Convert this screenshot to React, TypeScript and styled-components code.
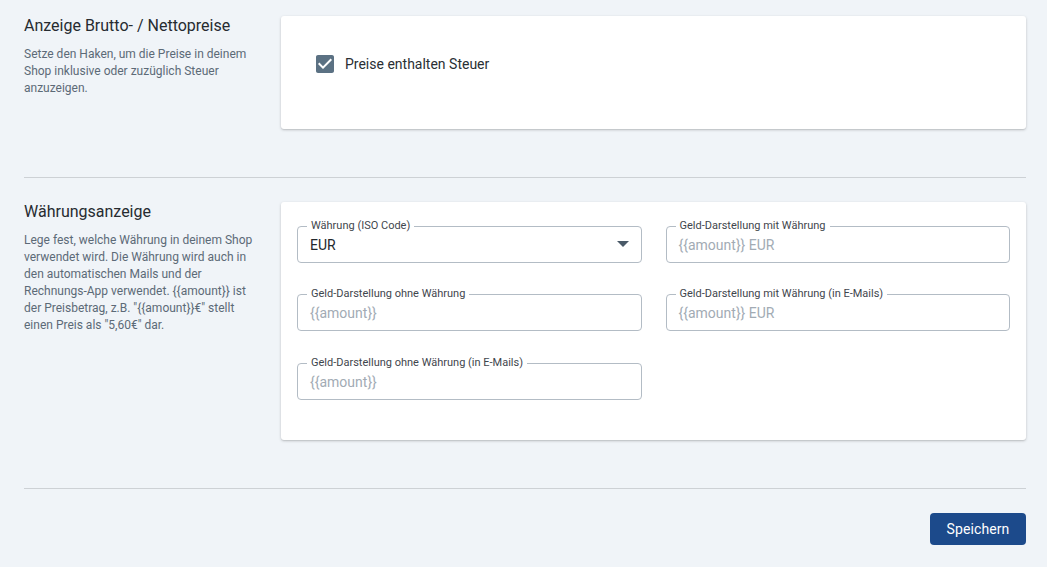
import React from "react";
import styled, { createGlobalStyle } from "styled-components";

const Global = createGlobalStyle`
  html, body { margin: 0; padding: 0; background: #f0f4f8; }
  body { font-family: Roboto, "Liberation Sans", Arial, sans-serif; -webkit-font-smoothing: antialiased; }
  * { box-sizing: border-box; }
`;

const Page = styled.div`
  padding: 16px 21px 22px 24px;
  display: flex;
  flex-direction: column;
`;

const Section = styled.section`
  display: grid;
  grid-template-columns: 232px 1fr;
  column-gap: 25px;
  align-items: start;
`;

const Intro = styled.div`
  display: flex;
  flex-direction: column;
`;

const Heading = styled.h2`
  margin: 0;
  font-size: 16px;
  line-height: 20px;
  font-weight: 400;
  color: #262b30;
`;

const Description = styled.p`
  margin: 10px 0 0;
  font-size: 12px;
  line-height: 17px;
  color: #5c6a77;
`;

const Card = styled.div<{ $pad: string }>`
  background: #fff;
  border-radius: 3px;
  box-shadow: 0 1px 3px rgba(0, 0, 0, 0.2), 0 1px 1px rgba(0, 0, 0, 0.06);
  padding: ${(p) => p.$pad};
`;

const Divider = styled.hr<{ $top: number }>`
  border: 0;
  height: 1px;
  background: #cdd1d5;
  margin: ${(p) => p.$top}px 0 24px;
`;

const CheckRow = styled.label`
  display: flex;
  align-items: center;
  gap: 11px;
  font-size: 14px;
  color: #2a2f34;
  cursor: pointer;
`;

const CheckIcon = styled.svg`
  width: 18px;
  height: 18px;
  display: block;
  flex: none;
`;

const Fields = styled.div`
  display: grid;
  grid-template-columns: 1fr 1fr;
  column-gap: 24px;
  row-gap: 31.5px;
`;

const Field = styled.div`
  position: relative;
  height: 37px;
  border: 1px solid #b3bcc5;
  border-radius: 4px;
  display: flex;
  align-items: center;
  padding: 0 12px;
`;

const Legend = styled.span`
  position: absolute;
  top: -8px;
  left: 9px;
  padding: 0 4px;
  background: #fff;
  font-size: 11px;
  line-height: 14px;
  color: #3f464d;
  white-space: nowrap;
`;

const Value = styled.span<{ $placeholder?: boolean }>`
  flex: 1;
  font-size: 14px;
  color: ${(p) => (p.$placeholder ? "#a2abb4" : "#23282d")};
  padding-top: 1px;
`;

const Footer = styled.div`
  display: flex;
  justify-content: flex-end;
`;

const Button = styled.button`
  width: 96px;
  height: 32px;
  border: 0;
  border-radius: 4px;
  background: #1c4a8b;
  color: #fff;
  font-family: inherit;
  font-size: 14px;
  font-weight: 400;
  letter-spacing: 0.1px;
  cursor: pointer;
`;

const Arrow = () => (
  <svg width="12" height="6" viewBox="0 0 12 6">
    <path d="M0 0h12L6 6z" fill="#4a5a68" />
  </svg>
);

const fields: { label: string; value: string; placeholder?: boolean; select?: boolean }[] = [
  { label: "Währung (ISO Code)", value: "EUR", select: true },
  { label: "Geld-Darstellung mit Währung", value: "{{amount}} EUR", placeholder: true },
  { label: "Geld-Darstellung ohne Währung", value: "{{amount}}", placeholder: true },
  { label: "Geld-Darstellung mit Währung (in E-Mails)", value: "{{amount}} EUR", placeholder: true },
  { label: "Geld-Darstellung ohne Währung (in E-Mails)", value: "{{amount}}", placeholder: true },
];

const currencyText =
  'Lege fest, welche Währung in deinem Shop verwendet wird. Die Währung wird auch in den automatischen Mails und der Rechnungs-App verwendet. {{amount}} ist der Preisbetrag, z.B. "{{amount}}€" stellt einen Preis als "5,60€" dar.';

export default function App() {
  return (
    <>
      <Global />
      <Page>
        <Section>
          <Intro>
            <Heading>Anzeige Brutto- / Nettopreise</Heading>
            <Description>
              Setze den Haken, um die Preise in deinem Shop inklusive oder zuzüglich Steuer anzuzeigen.
            </Description>
          </Intro>
          <Card $pad="39px 35px 56px">
            <CheckRow>
              <CheckIcon viewBox="3 3 18 18">
                <path
                  d="M19 3H5c-1.11 0-2 .9-2 2v14c0 1.1.89 2 2 2h14c1.1 0 2-.9 2-2V5c0-1.1-.9-2-2-2zm-9 14-5-5 1.41-1.41L10 14.17l7.59-7.59L19 8l-9 9z"
                  fill="#5b7183"
                />
              </CheckIcon>
              Preise enthalten Steuer
            </CheckRow>
          </Card>
        </Section>
        <Divider $top={48} />
        <Section>
          <Intro>
            <Heading>Währungsanzeige</Heading>
            <Description>{currencyText}</Description>
          </Intro>
          <Card $pad="23.5px 16px 40.5px">
            <Fields>
              {fields.map((f) => (
                <Field key={f.label}>
                  <Legend>{f.label}</Legend>
                  <Value $placeholder={f.placeholder}>{f.value}</Value>
                  {f.select && <Arrow />}
                </Field>
              ))}
            </Fields>
          </Card>
        </Section>
        <Divider $top={48} />
        <Footer>
          <Button>Speichern</Button>
        </Footer>
      </Page>
    </>
  );
}
